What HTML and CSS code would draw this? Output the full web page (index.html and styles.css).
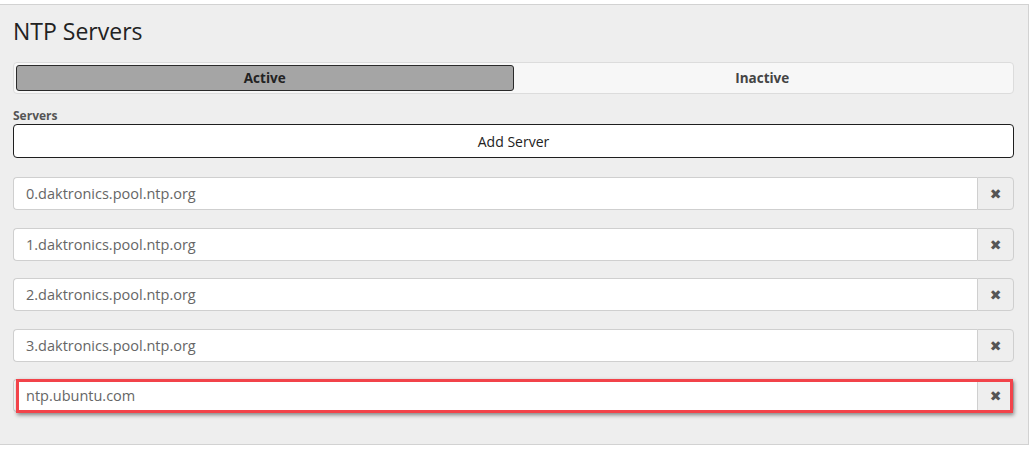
FILE: index.html
```html
<!DOCTYPE html>
<html>
<head>
<meta charset="utf-8">
<link rel="stylesheet" href="styles.css">
</head>
<body>
<div class="panel">
  <h1 class="title">NTP Servers</h1>
  <div class="toggle">
    <div class="tab tab-active">Active</div>
    <div class="tab">Inactive</div>
  </div>
  <div class="label">Servers</div>
  <div class="add-btn">Add Server</div>
  <div class="list">
    <div class="row"><div class="input">0.daktronics.pool.ntp.org</div><div class="remove">&#x2716;</div></div>
    <div class="row"><div class="input">1.daktronics.pool.ntp.org</div><div class="remove">&#x2716;</div></div>
    <div class="row"><div class="input">2.daktronics.pool.ntp.org</div><div class="remove">&#x2716;</div></div>
    <div class="row"><div class="input">3.daktronics.pool.ntp.org</div><div class="remove">&#x2716;</div></div>
    <div class="row row-highlight"><div class="input">ntp.ubuntu.com</div><div class="remove">&#x2716;</div><div class="highlight"></div></div>
  </div>
</div>
</body>
</html>
```
FILE: styles.css
```css
html, body { margin: 0; padding: 0; background: #fff; }
body { font-family: "Open Sans", "DejaVu Sans", sans-serif; color: #333; }
.panel {
  margin-top: 4px;
  width: 1001px;
  height: 439px;
  padding: 0 14px 0 13px;
  background: #eeeeee;
  border-top: 1px solid #d2d2d2;
  border-right: 1px solid #d2d2d2;
  border-bottom: 1px solid #d2d2d2;
}
.title {
  margin: 0;
  padding-top: 11px;
  font-size: 23px;
  font-weight: 400;
  line-height: 30px;
  color: #222;
  height: 46px;
}
.toggle {
  display: flex;
  height: 26px;
  padding: 2px;
  background: #f7f7f7;
  border: 1px solid #dcdcdc;
  border-radius: 4px;
}
.tab {
  flex: 1;
  display: flex;
  align-items: center;
  justify-content: center;
  font-size: 13.5px;
  font-weight: 700;
  color: #444;
  border: 1px solid transparent;
  border-radius: 3px;
}
.tab-active {
  background: #a5a5a5;
  border-color: #2a2a2a;
  color: #222;
}
.label {
  margin-top: 13px;
  font-size: 12px;
  font-weight: 700;
  color: #555;
  line-height: 17px;
}
.add-btn {
  height: 32px;
  background: #fff;
  border: 1px solid #1e1e1e;
  border-radius: 4px;
  display: flex;
  align-items: center;
  justify-content: center;
  font-size: 14px;
  color: #222;
}
.list {
  margin-top: 19px;
  display: flex;
  flex-direction: column;
  gap: 17.5px;
}
.row {
  position: relative;
  display: flex;
  height: 33px;
}
.input {
  flex: 1;
  background: #fff;
  border: 1px solid #cfcfcf;
  border-right: none;
  border-radius: 4px 0 0 4px;
  padding-left: 12px;
  display: flex;
  align-items: center;
  font-size: 14.5px;
  color: #666;
}
.remove {
  width: 35px;
  background: #eeeeee;
  border: 1px solid #cfcfcf;
  border-radius: 0 4px 4px 0;
  display: flex;
  align-items: center;
  justify-content: center;
  font-size: 14px;
  color: #555;
}
.highlight {
  position: absolute;
  left: 3px;
  top: 0;
  right: 1px;
  bottom: -1px;
  border: 3px solid #f2434a;
  box-shadow: 1px 2px 4px rgba(0,0,0,0.45);
  pointer-events: none;
}
```
